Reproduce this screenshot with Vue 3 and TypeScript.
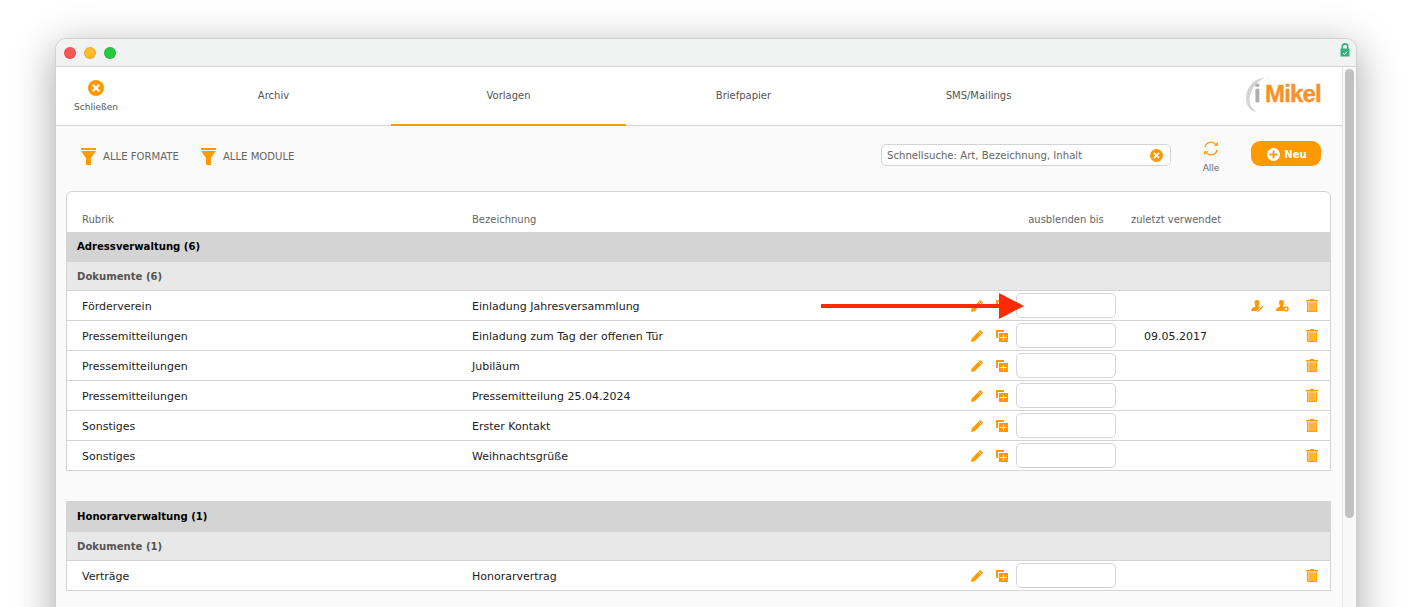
<template>
  <div class="page">
    <div class="window">
      <div class="titlebar">
        <span class="light red"></span>
        <span class="light yellow"></span>
        <span class="light green"></span>
        <svg class="lock" width="10" height="14" viewBox="0 0 10 14">
          <path d="M2.3 6V3.6a2.7 2.7 0 0 1 5.4 0V6" fill="none" stroke="#35ad7c" stroke-width="1.6" />
          <rect x="0.5" y="5.5" width="9" height="8" fill="#35ad7c" />
          <path d="M3 10l1.5 1.4L7 8.6" fill="none" stroke="#fff" stroke-width="1" />
        </svg>
      </div>
      <div class="body">
        <div class="content">
          <header class="nav">
            <div class="close">
              <svg width="16" height="16" viewBox="0 0 16 16">
                <circle cx="8" cy="8" r="8" fill="#ff9900" />
                <path d="M4.800 4.800l6.400 6.400M11.200 4.800l-6.400 6.400" stroke="#fff" stroke-width="2.200" />
              </svg>
              <span>Schließen</span>
            </div>
            <nav class="tabs">
              <div
                v-for="tab in tabs"
                :key="tab"
                :class="['tab', { active: tab === 'Vorlagen' }]"
              >
                {{ tab }}
              </div>
            </nav>
            <div class="logo">
              <svg class="swoosh" width="28" height="36" viewBox="0 0 28 36">
                <path d="M19 1C9 1 1 11 1 21c0 8 4 13 11 14C6 31 3 26 5 19 7 11 12 5 19 1z" fill="#d4d4d4" />
                <path d="M19 1c4 0 6 1 7 3-2-2-4-3-7-3z" fill="#e4e4e4" />
              </svg>
              <span class="logo-i">i</span><span class="logo-m">Mikel</span>
            </div>
          </header>

          <div class="toolbar">
            <div v-for="f in filters" :key="f" class="filter">
              <svg width="15" height="17" viewBox="0 0 15 17">
                <rect width="15" height="2" fill="#ff9900" />
                <path d="M0 3h15l-5 7v7H5v-7z" fill="#ff9900" />
              </svg>
              <span>{{ f }}</span>
            </div>
            <div class="search">
              <span>Schnellsuche: Art, Bezeichnung, Inhalt</span>
              <svg width="13" height="13" viewBox="0 0 16 16">
                <circle cx="8" cy="8" r="8" fill="#ff9900" />
                <path d="M4.800 4.800l6.400 6.400M11.200 4.800l-6.400 6.400" stroke="#fff" stroke-width="2.200" />
              </svg>
            </div>
            <div class="refresh">
              <svg width="16" height="15" viewBox="0 0 16 15">
                <path d="M2 6.200A6 6 0 0 1 12.600 3.400" fill="none" stroke="#ff9900" stroke-width="1.300" />
                <path d="M14 8.800A6 6 0 0 1 3.400 11.600" fill="none" stroke="#ff9900" stroke-width="1.300" />
                <path d="M10.600 4.800h4.200V1z" fill="#ff9900" />
                <path d="M5.400 10.200H1.200V14z" fill="#ff9900" />
              </svg>
              <span>Alle</span>
            </div>
            <button class="new" type="button">
              <svg width="13" height="13" viewBox="0 0 13 13">
                <circle cx="6.500" cy="6.500" r="6.500" fill="#fff" />
                <path d="M6.500 2.500v8M2.500 6.500h8" stroke="#ff9900" stroke-width="1.800" />
              </svg>
              Neu
            </button>
          </div>

          <section
            v-for="(group, g) in groups"
            :key="group.title"
            :class="['group', { first: g === 0 }]"
          >
            <div v-if="g === 0" class="row head">
              <span>Rubrik</span>
              <span>Bezeichnung</span>
              <span></span>
              <span class="center">ausblenden bis</span>
              <span class="last-used">zuletzt verwendet</span>
              <span></span>
            </div>
            <div class="group-title">{{ group.title }}</div>
            <div class="sub-title">{{ group.sub }}</div>
            <div v-for="(item, i) in group.items" :key="item.name" class="row item">
              <span class="txt">{{ item.cat }}</span>
              <span class="txt">{{ item.name }}</span>
              <span class="edit">
                <svg width="14" height="14" viewBox="0 0 14 14">
                  <path d="M1 13l.8-3.600L9.600 1.600a1 1 0 0 1 1.400 0l1.400 1.400a1 1 0 0 1 0 1.400L4.600 12.200z" fill="#ff9900" />
                  <path d="M8.600 2.600l2.800 2.800" stroke="#fff" stroke-width=".8" />
                </svg>
                <svg width="12" height="12" viewBox="0 0 12 12">
                  <path d="M0 0h8v2H2v6H0z" fill="#ff9900" />
                  <path d="M3 3h9v9H3z" fill="#ff9900" />
                  <path d="M7.500 4.500v6M4.500 7.500h6" stroke="#fff" stroke-width="1" />
                </svg>
              </span>
              <span class="field"></span>
              <span class="date txt">{{ item.date }}</span>
              <span class="actions">
                <template v-if="item.user">
                  <svg class="user" width="13" height="12" viewBox="0 0 13 12">
                    <path d="M6 0a2.400 2.400 0 0 1 2.400 2.800C8.200 4.400 7.800 5.200 7.500 6L9 7.200 5.400 11H0c0-2.500 2-3.600 4.500-4.400C4.200 5.600 3.700 4.400 3.600 2.800A2.400 2.400 0 0 1 6 0z" fill="#ff9900" />
                    <path d="M6.500 11.800l5.500-5.300" stroke="#ff9900" stroke-width="1.300" />
                  </svg>
                  <svg class="user" width="13" height="12" viewBox="0 0 13 12">
                    <path d="M5.500 0a2.400 2.400 0 0 1 2.400 2.800C7.700 4.400 7.300 5.400 7 6.400L8.400 7.200 7 11H0c0-2.500 1.800-3.500 4-4.400C3.700 5.600 3.200 4.400 3.100 2.800A2.400 2.400 0 0 1 5.500 0z" fill="#ff9900" />
                    <circle cx="10" cy="9" r="2" fill="#fff" stroke="#ff9900" stroke-width="1.400" />
                  </svg>
                </template>
                <svg class="trash" width="12" height="13" viewBox="0 0 12 13">
                  <path d="M4 0h4v1h4v1.500H0V1h4z" fill="#ff9900" />
                  <path d="M1 3h10v10H1z" fill="#ffc870" />
                  <path d="M1.500 3v10M4 4v8M6 4v8M8 4v8M10.500 3v10M1 12.500h10" stroke="#ff9900" stroke-width=".9" />
                </svg>
              </span>
              <svg
                v-if="g === 0 && i === 0"
                class="arrow"
                width="203"
                height="26"
                viewBox="0 0 203 26"
              >
                <path d="M0 11h178V0l25 13-25 13V15H0z" fill="#ff2a00" />
              </svg>
            </div>
          </section>
        </div>
        <div class="scrollbar"><div class="thumb"></div></div>
      </div>
    </div>
  </div>
</template>

<script setup lang="ts">
interface Item {
  cat: string
  name: string
  date?: string
  user?: boolean
}

const tabs = ['Archiv', 'Vorlagen', 'Briefpapier', 'SMS/Mailings']
const filters = ['ALLE FORMATE', 'ALLE MODULE']

const groups: { title: string; sub: string; items: Item[] }[] = [
  {
    title: 'Adressverwaltung (6)',
    sub: 'Dokumente (6)',
    items: [
      { cat: 'Förderverein', name: 'Einladung Jahresversammlung', user: true },
      { cat: 'Pressemitteilungen', name: 'Einladung zum Tag der offenen Tür', date: '09.05.2017' },
      { cat: 'Pressemitteilungen', name: 'Jubiläum' },
      { cat: 'Pressemitteilungen', name: 'Pressemitteilung 25.04.2024' },
      { cat: 'Sonstiges', name: 'Erster Kontakt' },
      { cat: 'Sonstiges', name: 'Weihnachtsgrüße' }
    ]
  },
  {
    title: 'Honorarverwaltung (1)',
    sub: 'Dokumente (1)',
    items: [{ cat: 'Verträge', name: 'Honorarvertrag' }]
  }
]
</script>

<style>
html,
body {
  margin: 0;
  background: #fff;
}
</style>

<style scoped>
.page {
  height: 607px;
  overflow: hidden;
  padding: 38px 55px 0;
  box-sizing: border-box;
  font-family: 'DejaVu Sans', Verdana, sans-serif;
  font-size: 11px;
  color: #222;
}

.window {
  height: 640px;
  border: 1px solid #cfd0cf;
  border-radius: 11px 11px 0 0;
  box-shadow: 0 10px 42px rgba(0, 0, 0, 0.36);
  background: #fafafa;
  overflow: hidden;
}

.titlebar {
  height: 27px;
  background: #f1f3f2;
  border-bottom: 1px solid #d2d2d2;
  display: flex;
  align-items: center;
  padding: 0 6px 0 8px;
  gap: 8px;
}

.light {
  width: 12px;
  height: 12px;
  border-radius: 50%;
  box-sizing: border-box;
  border: 1px solid rgba(0, 0, 0, 0.08);
}
.red {
  background: #fc5753;
}
.yellow {
  background: #fdbc2e;
}
.green {
  background: #28c83f;
}
.lock {
  margin-left: auto;
  margin-top: -6px;
}

.body {
  display: flex;
  height: 100%;
}
.content {
  flex: 1;
  min-width: 0;
}

.nav {
  height: 58px;
  background: #fff;
  border-bottom: 1px solid #d4d4d4;
  display: flex;
  color: #555;
  font-size: 10px;
}

.close {
  width: 80px;
  margin-right: 20px;
  display: flex;
  flex-direction: column;
  align-items: center;
  padding-top: 13px;
  gap: 6px;
  box-sizing: border-box;
  font-size: 9px;
}

.tabs {
  display: flex;
}
.tab {
  width: 235px;
  box-sizing: border-box;
  padding-top: 23px;
  text-align: center;
  border-bottom: 2px solid transparent;
  height: 59px;
}
.tab.active {
  border-bottom-color: #ff9900;
}

.logo {
  margin-left: auto;
  margin-right: 21px;
  position: relative;
  padding-top: 12px;
  font: bold 24px/30px 'Liberation Sans', Arial, sans-serif;
  letter-spacing: -0.8px;
  -webkit-text-stroke: 0.4px;
  height: fit-content;
}
.logo-i {
  color: #adadad;
  position: relative;
}
.logo-m {
  color: #f7922a;
  position: relative;
  margin-left: 5px;
}
.swoosh {
  position: absolute;
  left: -9px;
  top: 10px;
}

.toolbar {
  height: 65px;
  box-sizing: border-box;
  display: flex;
  align-items: flex-start;
  padding: 15px 21px 0 25px;
  color: #666;
}

.filter {
  display: flex;
  align-items: center;
  gap: 7px;
  margin-right: 22px;
  font-size: 10.1px;
  padding-top: 7px;
}

.search {
  margin-left: auto;
  margin-top: 3px;
  width: 290px;
  height: 22px;
  box-sizing: border-box;
  border: 1px solid #d4d4d4;
  border-radius: 5px;
  background: #fff;
  display: flex;
  align-items: center;
  justify-content: space-between;
  padding: 0 7px 0 5px;
  font-size: 10.15px;
}

.refresh {
  width: 80px;
  display: flex;
  flex-direction: column;
  align-items: center;
  gap: 7px;
  font-size: 9px;
}

.new {
  width: 70px;
  height: 25px;
  border: 0;
  border-radius: 9px;
  background: #ff9900;
  color: #fff;
  font: bold 10px 'DejaVu Sans', Verdana, sans-serif;
  display: flex;
  align-items: center;
  justify-content: center;
  gap: 4px;
  padding: 1px 0 0 2px;
}

.group {
  margin: 0 11px 30px 10px;
  border: 1px solid #d4d4d4;
  border-width: 0 1px 1px;
  background: #fff;
}
.group.first {
  border-top-width: 1px;
  border-radius: 6px 6px 0 0;
}

.row {
  display: grid;
  grid-template-columns: 390px 488px 56px 100px 124px 90px;
  padding-left: 15px;
  align-items: center;
  position: relative;
}

.head {
  height: 40px;
  box-sizing: border-box;
  padding-top: 14px;
  color: #666;
  font-size: 10px;
}
.center {
  text-align: center;
  white-space: nowrap;
}
.last-used {
  padding-left: 15px;
  white-space: nowrap;
}

.group-title {
  height: 31px;
  line-height: 32px;
  background: #d4d4d4;
  padding-left: 10px;
  font-weight: bold;
  font-size: 10.1px;
  color: #000;
}
.first .group-title {
  height: 30px;
  line-height: 30px;
}
.sub-title {
  height: 29px;
  line-height: 30px;
  box-sizing: border-box;
  background: #e8e8e8;
  border-bottom: 1px solid #d4d4d4;
  padding-left: 10px;
  font-weight: bold;
  font-size: 10.1px;
  color: #555;
}

.item {
  height: 30px;
  box-sizing: border-box;
  border-bottom: 1px solid #d4d4d4;
}
.item:last-child {
  border-bottom: 0;
  height: 29px;
}

.txt {
  padding-top: 2px;
}

.edit {
  display: flex;
  align-items: center;
  gap: 12px;
  padding-left: 10px;
}

.field {
  height: 25px;
  box-sizing: border-box;
  border: 1px solid #d4d4d4;
  border-radius: 5px;
  background: #fff;
}

.date {
  padding-left: 28px;
}

.actions {
  display: flex;
  align-items: center;
  justify-content: flex-end;
  padding-right: 12px;
  gap: 12px;
}
.trash {
  margin-left: 5px;
}

.arrow {
  position: absolute;
  left: 754px;
  top: 2px;
}

.scrollbar {
  width: 14px;
  background: #f8f8f8;
  border-left: 1px solid #e8e8e8;
  padding: 2px 2px 0;
  box-sizing: border-box;
}
.thumb {
  height: 449px;
  background: #c1c1c1;
  border-radius: 5px;
}
</style>
